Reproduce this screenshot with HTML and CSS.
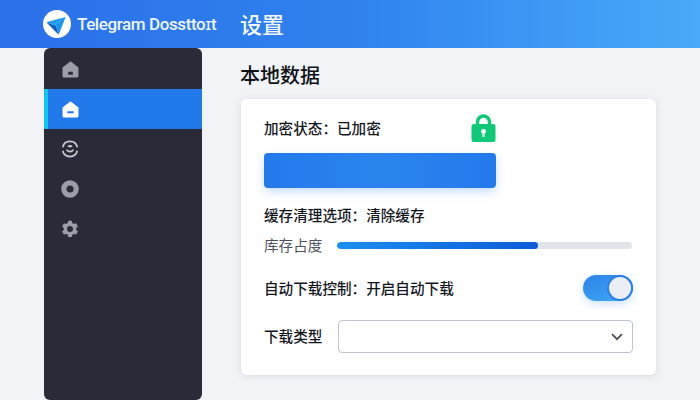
FILE: index.html
```html
<!DOCTYPE html>
<html lang="zh-CN">
<head>
<meta charset="utf-8">
<title>设置</title>
<link rel="stylesheet" href="styles.css">
</head>
<body>
<header class="topbar">
  <div class="brand">
    <svg class="logo" viewBox="0 0 28 28"><circle cx="14" cy="14" r="14" fill="#fff"/><path d="M3.3 12.3 22.6 7 15.7 24.7 12.8 15.4Z" fill="#1f96ec"/><path d="M3.3 12.3 15.7 24.7 12.8 15.4 8 14Z" fill="#0e5cc4"/><path d="M12.8 15.4 22.6 7 8 14Z" fill="#2aa6f2"/></svg>
    <span class="brand-name">Telegram Dossttoɪt</span>
  </div>
  <div class="page-title">设置</div>
</header>
<div class="layout">
  <nav class="sidebar">
    <div class="nav-item">
      <svg class="icon icon-home" viewBox="0 0 16 16"><path d="M8 .3 15.5 6V14a1.5 1.5 0 0 1-1.5 1.5H2A1.5 1.5 0 0 1 .5 14V6Z" fill="#9b9ea6"/><rect x="5.8" y="10.2" width="4.4" height="2.8" rx=".6" fill="#2a2d39"/></svg>
    </div>
    <div class="nav-item active">
      <svg class="icon icon-home" viewBox="0 0 16 16"><path d="M8 .3 15.5 6V14a1.5 1.5 0 0 1-1.5 1.5H2A1.5 1.5 0 0 1 .5 14V6Z" fill="#fff"/><rect x="5" y="9.6" width="6" height="2" rx=".6" fill="#2279ea"/></svg>
    </div>
    <div class="nav-item">
      <svg class="icon" viewBox="0 0 18 18"><path d="M1.7 7.2A7.5 7.5 0 0 1 16.3 7.2M16.3 10.8A7.5 7.5 0 0 1 1.7 10.8" fill="none" stroke="#c9cbd0" stroke-width="1.6"/><path d="M6.8 6.2Q9 4.6 11.2 6.2 9 8 6.8 6.2Z" fill="#c9cbd0" stroke="#c9cbd0"/><path d="M5.6 9.8Q9 13.6 12.4 9.8" fill="none" stroke="#c9cbd0" stroke-width="1.7"/></svg>
    </div>
    <div class="nav-item">
      <svg class="icon" viewBox="0 0 18 18"><circle cx="9" cy="9" r="6.2" fill="none" stroke="#9b9ea6" stroke-width="5.2"/></svg>
    </div>
    <div class="nav-item">
      <svg class="icon" viewBox="0 0 18 18"><path d="M7.2.8h3.6l.5 2.3 1.6.9 2.2-.7 1.8 3.1-1.7 1.6v1.9l1.7 1.6-1.8 3.1-2.2-.7-1.6.9-.5 2.3H7.2l-.5-2.3-1.6-.9-2.2.7-1.8-3.1 1.7-1.6V8l-1.7-1.6 1.8-3.1 2.2.7 1.6-.9Z" fill="#9b9ea6"/><circle cx="9" cy="9" r="3" fill="#2a2d39"/></svg>
    </div>
  </nav>
  <main class="content">
    <h1 class="section-title">本地数据</h1>
    <section class="card">
      <div class="row row-encrypt">
        <span class="label label-top">加密状态：已加密</span>
        <svg class="lock" viewBox="0 0 24 28"><path d="M6 13V8a6 6 0 0 1 12 0v5" fill="none" stroke="#10c878" stroke-width="3.4"/><rect y="10" width="24" height="18" rx="2.5" fill="#10c878"/><circle cx="12" cy="17.4" r="2.4" fill="#fff"/><rect x="11" y="17.4" width="2" height="5.5" fill="#fff"/></svg>
      </div>
      <div class="action-bar"></div>
      <div class="label cache-label">缓存清理选项：清除缓存</div>
      <div class="row usage">
        <span class="muted">库存占度</span>
        <div class="track"><div class="fill" style="width:68%"></div></div>
      </div>
      <div class="row row-auto">
        <span class="label">自动下载控制：开启自动下载</span>
        <div class="switch"><div class="knob"></div></div>
      </div>
      <div class="row row-type">
        <span class="label">下载类型</span>
        <div class="select">
          <svg class="chev" viewBox="0 0 12 8"><path d="M1 1.2 6 6.2 11 1.2" fill="none" stroke="#4a4d5a" stroke-width="1.7"/></svg>
        </div>
      </div>
    </section>
  </main>
</div>
</body>
</html>
```
FILE: styles.css
```css
* { box-sizing: border-box; }
html, body { margin: 0; height: 100%; }
body {
  width: 700px;
  height: 400px;
  overflow: hidden;
  background: #f1f3f6;
  color: #14161e;
  font-family: "Noto Sans CJK SC", Roboto, sans-serif;
  display: flex;
  flex-direction: column;
}
.topbar {
  height: 48px;
  flex: none;
  display: flex;
  align-items: center;
  padding-left: 43px;
  background: linear-gradient(90deg, #2b6fe8 0%, #2f82ee 50%, #4aa9f9 100%);
  color: #fff;
}
.brand { width: 197px; display: flex; align-items: center; gap: 6px; }
.logo { width: 28px; height: 28px; flex: none; }
.brand-name {
  font-family: Roboto, sans-serif;
  font-size: 17px;
  font-weight: 500;
  letter-spacing: -.4px;
  white-space: nowrap;
  color: #eef5ff;
}
.page-title { font-size: 22px; line-height: 28px; font-weight: 500; color: #f2f7ff; margin-top: -2px; }
.layout { flex: 1; display: flex; min-height: 0; padding-left: 44px; }
.sidebar {
  width: 158px;
  flex: none;
  background: #292c38;
  border-radius: 6px;
  overflow: hidden;
  padding-top: 1px;
  display: flex;
  flex-direction: column;
}
.nav-item {
  height: 40px;
  flex: none;
  display: flex;
  align-items: center;
  padding-left: 17px;
}
.nav-item.active {
  background: #2279ea;
  border-left: 4px solid #12c4ee;
  padding-left: 13px;
}
.icon { width: 18px; height: 18px; display: block; }
.icon-home { width: 17px; height: 17px; margin-left: 1px; }
.content { flex: 1; padding-left: 39px; padding-right: 44px; }
.section-title {
  margin: 13px 0 11px -1px;
  font-size: 20px;
  line-height: 27px;
  font-weight: 500;
  color: #0f1117;
}
.card {
  width: 415px;
  height: 276px;
  background: #fff;
  border-radius: 6px;
  box-shadow: 0 1px 6px rgba(150, 165, 190, .3);
  padding: 16px 24px 0 23px;
  display: flex;
  flex-direction: column;
}
.row { display: flex; align-items: center; justify-content: space-between; }
.row-encrypt { height: 28px; width: 232px; }
.label { font-size: 14.6px; line-height: 22px; font-weight: 500; color: #14161e; white-space: nowrap; margin-top: -1px; }
.label-top { margin-top: -3px; }
.lock { width: 25px; height: 28px; flex: none; margin-top: -3px; }
.action-bar {
  margin-top: 10px;
  width: 232px;
  height: 35px;
  border-radius: 4px;
  background: linear-gradient(90deg, #2379ea, #2b84ee 50%, #2379ea);
  box-shadow: 0 4px 10px rgba(40, 125, 235, .25);
}
.cache-label { margin-top: 16px; }
.usage { margin-top: 7px; height: 24px; }
.muted { font-size: 14.6px; line-height: 22px; color: #50535f; white-space: nowrap; margin-top: -1px; }
.track { width: 295px; height: 7px; border-radius: 4px; background: #e1e4e9; overflow: hidden; }
.fill { height: 100%; border-radius: 4px; background: linear-gradient(90deg, #1a90f0, #0d5bd8); }
.row-auto { margin-top: 17px; height: 28px; }
.switch {
  width: 50px;
  height: 26px;
  margin-right: -1px;
  border-radius: 13px;
  background: linear-gradient(160deg, #2f82ea, #3eaaf3);
  box-shadow: 0 3px 8px rgba(60, 140, 235, .25);
  display: flex;
  align-items: center;
  justify-content: flex-end;
}
.knob { width: 26px; height: 26px; border-radius: 50%; background: #eceef6; border: 2px solid #2b7ee8; }
.row-type { margin-top: 18px; }
.select {
  width: 295px;
  height: 33px;
  margin-right: -1px;
  border: 1px solid #bfc3d2;
  border-radius: 4px;
  background: #fff;
  display: flex;
  align-items: center;
  justify-content: flex-end;
  padding-right: 9px;
}
.chev { width: 12px; height: 8px; }
```
